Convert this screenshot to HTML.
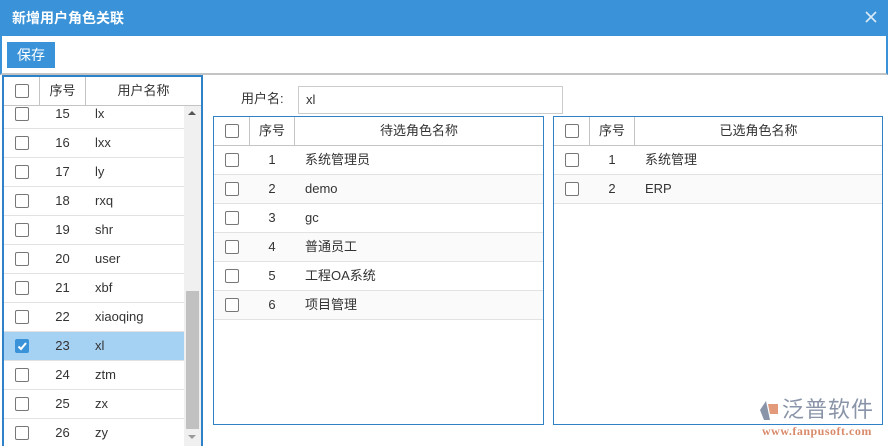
<!DOCTYPE html>
<html><head><meta charset="utf-8"><style>
*{box-sizing:border-box;margin:0;padding:0}
body{width:888px;height:446px;overflow:hidden;background:#fff;font-family:"Liberation Sans","Noto Sans CJK SC",sans-serif;font-size:13px;color:#333;position:relative}
.abs{position:absolute}
.title{left:0;top:0;width:888px;height:36px;background:#3a93d8;color:#fff;font-weight:bold;font-size:14px;line-height:36px;padding-left:12px}
.tb{left:0;top:36px;width:888px;height:39px;border-left:2px solid #3a93d8;border-right:2px solid #3a93d8;border-bottom:2px solid #c4c4c4}
.btn{left:7px;top:42px;width:48px;height:26px;background:#3a93d8;color:#fff;font-size:14px;line-height:26px;text-align:center}
.cb{position:absolute;width:14px;height:14px;border:1px solid #777;border-radius:2px;background:#fff}
.cb.on{background:#3a93d8;border-color:#3a93d8}
.row{position:absolute;height:29px;border-bottom:1px solid #e2e2e2;line-height:28px}
.hdr{position:absolute;height:29px;border-bottom:1px solid #c4c4c4;line-height:28px;background:#fff}
.c{position:absolute;top:0;height:100%}
</style></head><body>
<div class="abs title">新增用户角色关联</div>
<svg class="abs" style="left:865px;top:11px" width="12" height="12"><path d="M1 1L11 11M11 1L1 11" stroke="#dbeaf7" stroke-width="1.6"/></svg>
<div class="abs tb"></div>
<div class="abs btn">保存</div>

<div class="abs" style="left:2px;top:75px;width:201px;height:371px;border:2px solid #2f82c8;border-bottom:none;overflow:hidden">
 <div style="position:absolute;left:0;top:0;width:197px;height:371px;overflow:hidden">
  <div id="lrows" style="position:absolute;left:0;top:0;width:197px;height:371px"></div>
 </div>
 <div class="hdr" style="left:0;top:0;width:197px;height:29px">
  <div class="cb" style="left:11px;top:7px"></div>
  <div class="c" style="left:35px;width:1px;background:#c4c4c4"></div>
  <div class="c" style="left:36px;width:45px;text-align:center">序号</div>
  <div class="c" style="left:81px;width:1px;background:#c4c4c4"></div>
  <div class="c" style="left:82px;width:115px;text-align:center">用户名称</div>
 </div>
 <div style="position:absolute;left:180px;top:29px;width:17px;height:342px;background:#f0f0f0"></div>
 <div style="position:absolute;left:182px;top:214px;width:13px;height:138px;background:#c1c1c1"></div>
 <div style="position:absolute;left:184px;top:34px;width:0;height:0;border-left:4px solid transparent;border-right:4px solid transparent;border-bottom:4px solid #555"></div>
 <div style="position:absolute;left:184px;top:358px;width:0;height:0;border-left:4px solid transparent;border-right:4px solid transparent;border-top:4px solid #999"></div>
</div>

<div class="abs" style="left:241px;top:90px;line-height:18px">用户名:</div>
<div class="abs" style="left:298px;top:86px;width:265px;height:28px;border:1px solid #ccc;line-height:26px;padding-left:7px">xl</div>

<div class="abs" id="mid" style="left:213px;top:116px;width:331px;height:309px;border:1px solid #2f82c8"></div>
<div class="abs" id="rt" style="left:553px;top:116px;width:330px;height:309px;border:1px solid #2f82c8"></div>

<div class="abs" style="left:758px;top:398px;width:124px;height:24px;background:#fff"></div>
<svg class="abs" style="left:758px;top:400px" width="22" height="22" viewBox="0 0 22 22"><path d="M8 1 L2 10 L6 20 L12 20 Z" fill="#8a94a8"/><path d="M10 4 L20 4 L20 14 L12 14 Z" fill="#e29a7a"/></svg>
<div class="abs" style="left:782px;top:397px;font-size:22px;color:#8a94a8;line-height:26px;letter-spacing:1px">泛普软件</div>
<div class="abs" style="left:762px;top:424px;font-family:'Liberation Serif',serif;font-size:12px;color:#d88a6a;font-weight:bold;letter-spacing:0.5px">www.fanpusoft.com</div>

<script>
var L=document.getElementById('lrows'),h='';
var names=['lx','lxx','ly','rxq','shr','user','xbf','xiaoqing','xl','ztm','zx','zy'];
for(var i=0;i<12;i++){var n=15+i,tp=23+29*i,on=n==23;
h+='<div class="row" style="left:0;top:'+tp+'px;width:180px;'+(on?'background:#a5d1f3;':'')+'"><div class="cb'+(on?' on':'')+'" style="left:11px;top:7px">'+(on?'<svg width="12" height="12" style="position:absolute;left:0;top:0"><path d="M2.5 6.5 L5 9 L10 3" stroke="#fff" stroke-width="2" fill="none"/></svg>':'')+'</div><div class="c" style="left:36px;width:45px;text-align:center">'+n+'</div><div class="c" style="left:91px">'+names[i]+'</div></div>';}
L.innerHTML=h;
function tbl(id,title,items,w){var e=document.getElementById(id),s='<div class="hdr" style="left:0;top:0;width:'+w+'px"><div class="cb" style="left:11px;top:7px"></div><div class="c" style="left:35px;width:1px;background:#c4c4c4"></div><div class="c" style="left:36px;width:44px;text-align:center">序号</div><div class="c" style="left:80px;width:1px;background:#c4c4c4"></div><div class="c" style="left:81px;width:'+(w-81)+'px;text-align:center">'+title+'</div></div>';
items.forEach(function(t,i){s+='<div class="row" style="left:0;top:'+(29+29*i)+'px;width:'+w+'px;'+(i%2?'background:#fafafa;':'')+'"><div class="cb" style="left:11px;top:7px"></div><div class="c" style="left:36px;width:44px;text-align:center">'+(i+1)+'</div><div class="c" style="left:91px">'+t+'</div></div>';});
e.innerHTML=s;}
tbl('mid','待选角色名称',['系统管理员','demo','gc','普通员工','工程OA系统','项目管理'],329);
tbl('rt','已选角色名称',['系统管理','ERP'],328);
</script>
</body></html>
